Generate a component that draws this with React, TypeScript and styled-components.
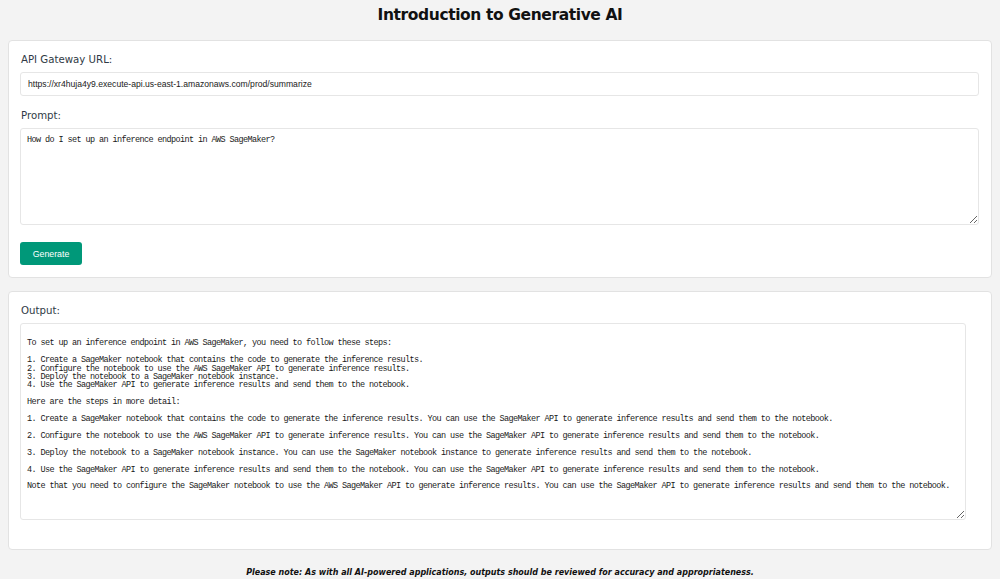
import React from 'react';
import styled, { createGlobalStyle } from 'styled-components';

const GlobalStyle = createGlobalStyle`
    body {
        margin: 0;
        background-color: #f3f3f3;
        font-family: "DejaVu Sans", Verdana, sans-serif;
    }
`;

const Page = styled.div`
    padding: 0 8px;
    display: flex;
    flex-flow: column;
`;

const Title = styled.h1`
    margin: 0;
    height: 31px;
    line-height: 31px;
    text-align: center;
    font-size: 15.5px;
    letter-spacing: -0.4px;
    font-weight: bold;
    color: #111;
`;

const Card = styled.section<{ $gap: number }>`
    background-color: #fff;
    border: 1px solid #e2e2e2;
    border-radius: 4px;
    padding: 12px 12px 12px 11px;
    margin-top: ${(props) => props.$gap}px;
    display: flex;
    flex-flow: column;
`;

const Label = styled.label`
    font-size: 10.2px;
    line-height: 12px;
    color: #2f3a45;
    margin: 1px 0 6px 1px;
`;

const UrlInput = styled.input`
    box-sizing: border-box;
    height: 24px;
    border: 1px solid #e6e6e6;
    border-radius: 3px;
    padding: 0 7px;
    font-family: "Liberation Sans", Arial, sans-serif;
    font-size: 8.6px;
    color: #1a1a1a;
    margin-bottom: 13px;
    outline: none;
`;

const TextArea = styled.textarea<{ $height: number; $trim?: number }>`
    box-sizing: border-box;
    height: ${(props) => props.$height}px;
    width: calc(100% - ${(props) => props.$trim || 0}px);
    border: 1px solid #e6e6e6;
    border-radius: 3px;
    padding: 7px 6px 4px;
    font-family: "Liberation Mono", "DejaVu Sans Mono", monospace;
    font-size: 8.5px;
    letter-spacing: -0.6px;
    line-height: 8.4px;
    color: #1a1a1a;
    outline: none;
    resize: vertical;
    white-space: pre-wrap;
`;

const GenerateButton = styled.button`
    align-self: flex-start;
    width: 62px;
    height: 23px;
    margin-top: 17px;
    border: none;
    border-radius: 3px;
    background-color: #009879;
    color: #fff;
    font-family: "Liberation Sans", Arial, sans-serif;
    font-size: 8.8px;
    cursor: pointer;
`;

const Spacer = styled.div`
    height: 17px;
`;

const Note = styled.p`
    margin: 0;
    padding: 18px 0 2px;
    text-align: center;
    font-size: 8px;
    font-weight: bold;
    font-style: italic;
    color: #111;
`;

const outputText = `
To set up an inference endpoint in AWS SageMaker, you need to follow these steps:

1. Create a SageMaker notebook that contains the code to generate the inference results.
2. Configure the notebook to use the AWS SageMaker API to generate inference results.
3. Deploy the notebook to a SageMaker notebook instance.
4. Use the SageMaker API to generate inference results and send them to the notebook.

Here are the steps in more detail:

1. Create a SageMaker notebook that contains the code to generate the inference results. You can use the SageMaker API to generate inference results and send them to the notebook.

2. Configure the notebook to use the AWS SageMaker API to generate inference results. You can use the SageMaker API to generate inference results and send them to the notebook.

3. Deploy the notebook to a SageMaker notebook instance. You can use the SageMaker notebook instance to generate inference results and send them to the notebook.

4. Use the SageMaker API to generate inference results and send them to the notebook. You can use the SageMaker API to generate inference results and send them to the notebook.

Note that you need to configure the SageMaker notebook to use the AWS SageMaker API to generate inference results. You can use the SageMaker API to generate inference results and send them to the notebook.`;

const App = () => {
    return (
        <Page>
            <GlobalStyle />
            <Title>Introduction to Generative AI</Title>
            <Card $gap={9}>
                <Label>API Gateway URL:</Label>
                <UrlInput
                    defaultValue="https://xr4huja4y9.execute-api.us-east-1.amazonaws.com/prod/summarize"
                />
                <Label>Prompt:</Label>
                <TextArea
                    $height={97}
                    defaultValue="How do I set up an inference endpoint in AWS SageMaker?"
                />
                <GenerateButton>Generate</GenerateButton>
            </Card>
            <Card $gap={13}>
                <Label>Output:</Label>
                <TextArea $height={197} $trim={13} defaultValue={outputText} />
                <Spacer />
            </Card>
            <Note>
                Please note: As with all AI-powered applications, outputs should
                be reviewed for accuracy and appropriateness.
            </Note>
        </Page>
    );
};

export default App;
